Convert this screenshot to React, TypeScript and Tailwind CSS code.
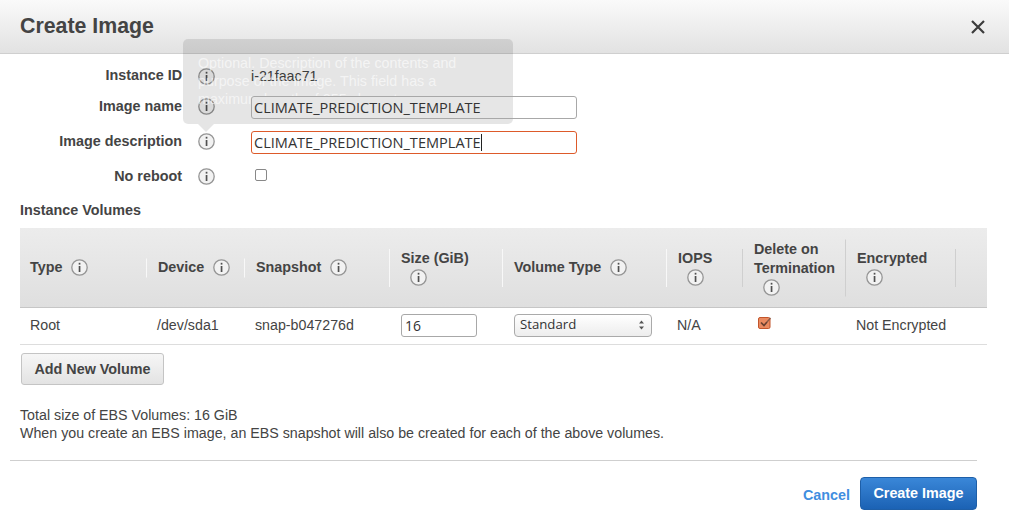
const sans = "font-['Liberation_Sans',Arial,sans-serif]";
const uiFont = "font-['Open_Sans','Noto_Sans',sans-serif]";

function InfoIcon({ className = "" }: { className?: string }) {
  return (
    <svg viewBox="0 0 17 17" className={"h-[17px] w-[17px] shrink-0 " + className}>
      <circle cx="8.5" cy="8.5" r="7.7" fill="#f2f2f2" stroke="#959595" strokeWidth="1.3" />
      <rect x="7.7" y="7" width="1.7" height="6" fill="#505050" />
      <rect x="7.7" y="3.8" width="1.7" height="1.8" fill="#505050" />
    </svg>
  );
}

function FormRow({ label, className, children }: { label: string; className: string; children: React.ReactNode }) {
  return (
    <div className={"flex items-center " + className}>
      <div className="w-[182px] text-right text-[14.35px] font-bold text-[#444]">{label}</div>
      <InfoIcon className="ml-[16px]" />
      <div className="ml-[36px] flex-1">{children}</div>
    </div>
  );
}

function TextBox({ focused, className }: { focused?: boolean; className: string }) {
  return (
    <div
      className={
        "relative z-10 mt-[2px] flex h-[23px] w-[326px] items-center rounded-[3px] border pl-[2px] text-[14.55px] text-[#333] " +
        uiFont +
        (focused ? " border-[#dd5a2a] " : " border-[#a8a8a8] ") +
        className
      }
    >
      CLIMATE_PREDICTION_TEMPLATE
      {focused && <span className="h-[17px] w-px bg-[#222]" />}
    </div>
  );
}

function HeaderCell({
  label,
  width,
  sep,
  stack,
  iconClass = "ml-[9px]",
  pl = "pl-[11px]",
}: {
  label: string;
  width: string;
  sep: string;
  stack?: boolean;
  iconClass?: string;
  pl?: string;
}) {
  return (
    <div className={"relative flex h-full items-center " + width + " " + pl}>
      {stack ? (
        <div className="flex flex-col">
          <span className="whitespace-pre-line leading-[19px]">{label}</span>
          <InfoIcon className={"mt-[1px] " + iconClass} />
        </div>
      ) : (
        <div className="flex items-center gap-[9px]">
          <span>{label}</span>
          <InfoIcon />
        </div>
      )}
      <span className={"absolute right-0 top-1/2 w-px -translate-y-1/2 " + sep} />
    </div>
  );
}

export default function App() {
  return (
    <div className={"relative h-[522px] w-[1009px] overflow-hidden bg-white text-[#444] " + sans}>
      {/* Header */}
      <div className="flex h-[54px] items-center justify-between border-b border-[#cfcfcf] bg-gradient-to-b from-[#fafafa] to-[#e2e2e2] pl-[20px] pr-[24px]">
        <h1 className="text-[21.33px] font-bold text-[#444]">Create Image</h1>
        <svg viewBox="0 0 14 14" className="h-[14px] w-[14px]">
          <path d="M1 1l12 12M13 1L1 13" stroke="#3c3c3c" strokeWidth="2.2" fill="none" />
        </svg>
      </div>

      {/* Form */}
      <div className="pt-[12px]">
        <FormRow label="Instance ID" className="h-[20px]">
          <span className="text-[14.24px] text-[#444]">i-21faac71</span>
        </FormRow>
        <FormRow label="Image name" className="mt-[9px] h-[23px]">
          <TextBox className="bg-[linear-gradient(to_right,#e6e6e6_261px,#fff_261px)]" />
        </FormRow>
        <FormRow label="Image description" className="mt-[12px] h-[23px]">
          <TextBox focused className="bg-white" />
        </FormRow>
        <FormRow label="No reboot" className="mt-[14px] h-[19px]">
          <span className="-mt-[3px] ml-[4px] block h-[12px] w-[12px] rounded-[2px] border border-[#888] bg-white" />
        </FormRow>
      </div>

      {/* Volumes */}
      <div className="ml-[20px] mr-[22px] mt-[16px]">
        <div className="text-[14.35px] font-bold leading-[16px] text-[#444]">Instance Volumes</div>
        <div className="mt-[10px] flex h-[80px] items-center border-b border-[#c6c6c6] bg-gradient-to-b from-[#ececec] to-[#dfdfdf] text-[14.35px] font-bold text-[#444]">
          <HeaderCell label="Type" width="w-[127px]" sep="h-[19px] bg-[#f8f8f8]" pl="pl-[10px]" />
          <HeaderCell label="Device" width="w-[98px]" sep="h-[19px] bg-[#f8f8f8]" />
          <HeaderCell label="Snapshot" width="w-[145px]" sep="h-[38px] bg-[#f8f8f8]" />
          <HeaderCell label="Size (GiB)" width="w-[113px]" sep="h-[38px] bg-[#f8f8f8]" stack />
          <HeaderCell label="Volume Type" width="w-[164px]" sep="h-[38px] bg-[#f8f8f8]" />
          <HeaderCell label="IOPS" width="w-[76px]" sep="h-[38px] bg-[#cfcfcf]" stack />
          <HeaderCell label={"Delete on\nTermination"} width="w-[103px]" sep="h-[57px] bg-[#cfcfcf]" stack />
          <HeaderCell label="Encrypted" width="w-[110px]" sep="h-[38px] bg-[#cfcfcf]" stack />
        </div>
        <div className="flex h-[37px] items-center border-b border-[#ddd] pb-[1px] text-[14.24px] text-[#444]">
          <div className="w-[127px] pl-[10px]">Root</div>
          <div className="w-[98px] pl-[10px]">/dev/sda1</div>
          <div className="w-[145px] pl-[10px]">snap-b047276d</div>
          <div className="w-[113px] pl-[11px]">
            <div className={"-mt-[1px] flex h-[23px] w-[76px] items-center rounded-[3px] border border-[#a8a8a8] bg-white pl-[3px] text-[14px] text-[#333] " + uiFont}>
              16
            </div>
          </div>
          <div className="w-[164px] pl-[11px]">
            <div className={"-mt-[1px] flex h-[23px] w-[138px] items-center justify-between rounded-[4px] border border-[#aaa] bg-gradient-to-b from-[#fff] to-[#ededed] pl-[5px] pr-[6px] text-[13.2px] text-[#333] " + uiFont}>
              Standard
              <svg viewBox="0 0 7 12" className="h-[12px] w-[7px]">
                <path d="M3.5 1.5L6 4.5H1zM3.5 10.5L1 7.5H6z" fill="#555" />
              </svg>
            </div>
          </div>
          <div className="w-[76px] pl-[10px]">N/A</div>
          <div className="w-[103px] pl-[15px]">
            <svg viewBox="0 0 14 13" className="mt-[-6px] h-[13px] w-[14px]">
              <rect x="0.5" y="1.5" width="11.5" height="11" rx="1.5" fill="#ea8a60" stroke="#c2552b" />
              <path d="M3 6.5l3 3L9 6" stroke="#6b4030" strokeWidth="1.7" fill="none" />
              <path d="M9 6l3.5-4" stroke="#8a5a48" strokeWidth="1.3" fill="none" />
            </svg>
          </div>
          <div className="pl-[10px]">Not Encrypted</div>
        </div>
        <button className="ml-px mt-[8px] block h-[32px] w-[143px] rounded-[3px] border border-[#c4c4c4] bg-gradient-to-b from-[#f6f6f6] to-[#e3e3e3] pt-[1px] text-[14.35px] font-bold text-[#444]">
          Add New Volume
        </button>
        <div className="mt-[21px] text-[14.24px] leading-[18px] text-[#444]">
          <div>Total size of EBS Volumes: 16 GiB</div>
          <div className="whitespace-nowrap">When you create an EBS image, an EBS snapshot will also be created for each of the above volumes.</div>
        </div>
      </div>

      {/* Footer */}
      <div className="ml-[10px] mr-[32px] mt-[18px] border-t border-[#cfcfcf]">
        <div className="mt-[16px] flex items-center justify-end">
          <a className="mr-[10px] mt-[5px] text-[14.35px] font-bold text-[#3f8ee0]">Cancel</a>
          <button className="h-[33px] w-[117px] rounded-[4px] border border-[#1e5fa8] bg-gradient-to-b from-[#3a87d8] to-[#1b62b4] text-[14.35px] font-bold text-white">
            Create Image
          </button>
        </div>
      </div>

      {/* Tooltip fading in over the form, the name input stays above its text */}
      <div className="absolute left-[183px] top-[39px] z-0 h-[85px] w-[330px] rounded-[5px] bg-black/10 pl-[15px] pt-[15px] text-[14.3px] leading-[18px] text-white/60">
        Optional. Description of the contents and
        <br />
        purpose of the image. This field has a
        <br />
        maximum length of 255 characters.
        <span className="absolute left-[15px] top-[85px] h-0 w-0 border-x-[8px] border-t-[8px] border-x-transparent border-t-black/10" />
      </div>
    </div>
  );
}
